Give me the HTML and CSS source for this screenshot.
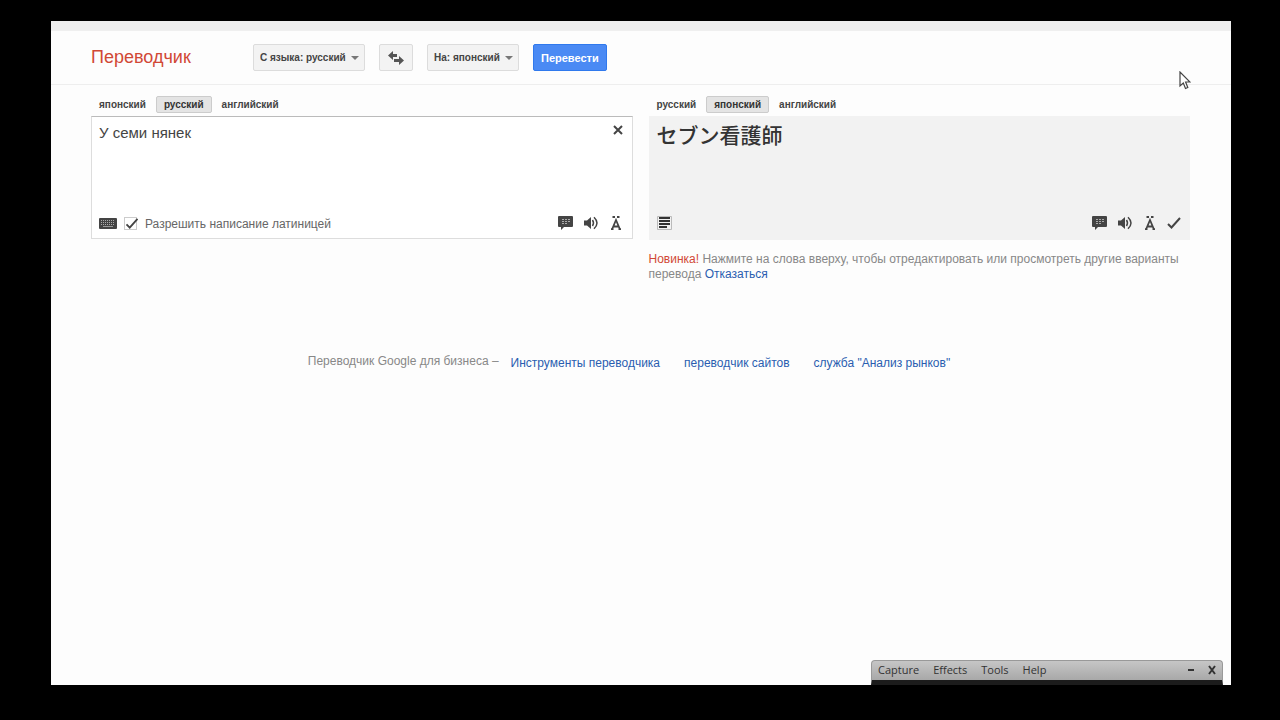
FILE: index.html
```html
<!DOCTYPE html>
<html lang="ru">
<head>
<meta charset="utf-8">
<title>Переводчик</title>
<link rel="stylesheet" href="styles.css">
</head>
<body>
<svg class="sprite" aria-hidden="true">
  <symbol id="i-comment" viewBox="0 0 15 14"><path fill="#444" d="M1 0h13q1 0 1 1v9q0 1-1 1H6l-3 3v-3H1q-1 0-1-1V1q0-1 1-1z"/><path stroke="#aaa" stroke-dasharray="2 1" d="M4 3.500h8M4 5.500h8M4 7.500h5"/></symbol>
  <symbol id="i-sound" viewBox="0 0 15 14"><path fill="#444" d="M0 4.500h3L7 1v12L3 9.500H0z"/><path fill="none" stroke="#444" stroke-width="1.500" d="M8.500 4q2 3 0 6M10 1.200q6 5.800 0 11.600"/></symbol>
  <symbol id="i-accent" viewBox="0 0 12 16"><path fill="#444" d="M2.500 1h2.500v2H2.500zM7 1h2.500v2H7z"/><path fill="none" stroke="#444" stroke-width="1.800" d="M2 14.500 6 5l4 9.500M3.500 11.500h5M1 14.200h2.500M8.500 14.200H11"/></symbol>
  <symbol id="i-check" viewBox="0 0 14 12"><path fill="none" stroke="#444" stroke-width="2" d="M1 7l3.500 3.500L13 1"/></symbol>
</svg>
<div class="screen">
  <div class="strip"></div>
  <header class="header">
    <h1 class="logo">Переводчик</h1>
    <span class="picker"><select class="btn" aria-label="С языка"><option>С языка: русский</option></select></span>
    <button class="btn swap" type="button" aria-label="Поменять языки"><svg width="18" height="14" viewBox="0 0 18 14"><path fill="#555" d="M1 4.500 6 0v3h4v3H6v3zM17 9.500 12 5v3H7v3h5v3z"/></svg></button>
    <span class="picker"><select class="btn" aria-label="На"><option>На: японский</option></select></span>
    <button class="btn primary" type="button">Перевести</button>
  </header>
  <main class="columns">
    <section class="column">
      <nav class="tabs"><button class="tab" type="button">японский</button><button class="tab active" type="button">русский</button><button class="tab" type="button">английский</button></nav>
      <div class="box source">
        <div class="entry">
          <textarea class="text" aria-label="Исходный текст" spellcheck="false">У семи нянек</textarea>
          <button class="icon" type="button" aria-label="Очистить"><svg width="10" height="10" viewBox="0 0 10 10"><path stroke="#444" stroke-width="2" d="M1 1l8 8M9 1 1 9"/></svg></button>
        </div>
        <div class="tools">
          <button class="icon keys" type="button" aria-label="Клавиатура"><svg width="18" height="11" viewBox="0 0 18 11"><rect width="18" height="11" rx="1" fill="#444"/><path stroke="#aaa" stroke-dasharray="1 1" d="M2 2.500h14M2 4.500h14M2 6.500h14"/><path stroke="#999" d="M4 8.500h10"/></svg></button>
          <span class="tick"><input type="checkbox" id="latin" checked><svg width="14" height="11" viewBox="0 0 14 12"><use href="#i-check"/></svg></span>
          <label class="latin" for="latin">Разрешить написание латиницей</label>
          <div class="actions">
            <button class="icon" type="button" aria-label="Комментарий"><svg width="15" height="14"><use href="#i-comment"/></svg></button>
            <button class="icon" type="button" aria-label="Прослушать"><svg width="15" height="14"><use href="#i-sound"/></svg></button>
            <button class="icon" type="button" aria-label="Латиница"><svg width="12" height="16"><use href="#i-accent"/></svg></button>
          </div>
        </div>
      </div>
    </section>
    <section class="column">
      <nav class="tabs"><button class="tab" type="button">русский</button><button class="tab active" type="button">японский</button><button class="tab" type="button">английский</button></nav>
      <div class="box result">
        <div class="translation" lang="ja">セブン看護師</div>
        <div class="tools">
          <button class="icon" type="button" aria-label="Словарь"><svg width="15" height="14" viewBox="0 0 15 14"><path stroke="#bbb" fill="none" d="M.5.5h14v13H.5z"/><path stroke="#333" stroke-width="2" d="M2 2h11M2 5h11M2 8h11M2 11h8"/></svg></button>
          <div class="actions">
            <button class="icon" type="button" aria-label="Комментарий"><svg width="15" height="14"><use href="#i-comment"/></svg></button>
            <button class="icon" type="button" aria-label="Прослушать"><svg width="15" height="14"><use href="#i-sound"/></svg></button>
            <button class="icon" type="button" aria-label="Латиница"><svg width="12" height="16"><use href="#i-accent"/></svg></button>
            <button class="icon" type="button" aria-label="Оценить"><svg width="14" height="12"><use href="#i-check"/></svg></button>
          </div>
        </div>
      </div>
      <p class="note"><strong>Новинка!</strong> Нажмите на слова вверху, чтобы отредактировать или просмотреть другие варианты перевода <a href="#">Отказаться</a></p>
    </section>
  </main>
  <footer class="footer">
    <span>Переводчик Google для бизнеса –</span>
    <nav class="links"><a href="#">Инструменты переводчика</a><a href="#">переводчик сайтов</a><a href="#">служба "Анализ рынков"</a></nav>
  </footer>
  <svg class="cursor" width="12" height="19" viewBox="0 0 12 19"><path fill="#fff" stroke="#444" stroke-width="1.200" d="M1 1v14l3.300-3 2.200 5.500 2.300-1L6.600 11H11z"/></svg>
  <div class="recorder">
    <div class="bar">
      <button type="button">Capture</button><button type="button">Effects</button><button type="button">Tools</button><button type="button">Help</button>
      <button class="min" type="button" aria-label="Свернуть"><svg width="6" height="10" viewBox="0 0 6 10"><path stroke="#333" stroke-width="2" d="M0 5h6"/></svg></button>
      <button type="button" aria-label="Закрыть"><svg width="8" height="10" viewBox="0 0 8 10"><path stroke="#333" stroke-width="2" d="M1 1l6 8M7 1 1 9"/></svg></button>
    </div>
  </div>
</div>
</body>
</html>
```
FILE: styles.css
```css
* { box-sizing: border-box; }
body {
  margin: 0;
  min-height: 100vh;
  display: flex;
  padding: 21px 49px 35px 51px;
  background: #000;
  color: #444;
  font-family: "Liberation Sans", Arial, "Noto Sans CJK JP", sans-serif;
  font-size: 12px;
}
button, select, textarea { font-family: inherit; color: inherit; }
button { border: 0; padding: 0; background: none; }
svg { display: block; }
a { color: #2a5db0; text-decoration: none; }
.sprite { position: absolute; width: 0; height: 0; }
.screen { position: relative; flex: 1; background: #fdfdfd; overflow: hidden; }
.strip { height: 10px; background: #efefef; }

.header {
  display: flex;
  align-items: center;
  gap: 14px;
  height: 54px;
  padding: 0 40px;
  border-bottom: 1px solid #eee;
}
.logo { margin: 0; width: 148px; font-size: 18px; font-weight: 400; color: #d14836; }
.btn {
  height: 27px;
  padding: 0 7px;
  border: 1px solid #dcdcdc;
  border-radius: 2px;
  background: #f3f3f3;
  font-size: 10px;
  font-weight: 700;
}
.picker { position: relative; }
.picker .btn { display: block; appearance: none; padding: 0 18px 0 6px; }
.picker::after {
  content: "";
  position: absolute;
  right: 6px;
  top: 12px;
  border: 4px solid transparent;
  border-top-color: #777;
  border-bottom: 0;
  pointer-events: none;
}
.primary { border-color: #3079ed; background: #4a8af4; color: #fff; font-size: 11px; }

.columns { display: grid; grid-template-columns: 1fr 1fr; gap: 16px; padding: 11px 41px 0 40px; }
.tabs { display: flex; gap: 2px; height: 17px; margin-bottom: 3px; }
.tab { padding: 0 7px; border: 1px solid transparent; border-radius: 2px; font-size: 10px; font-weight: 700; }
.tab.active { border-color: #ccc; background: #e4e4e4; color: #333; }
.box { display: flex; flex-direction: column; justify-content: space-between; min-height: 123px; padding: 7px; }
.source { padding-bottom: 6px; border: 1px solid #ddd; border-top-color: #bbb; background: #fff; }
.result { min-height: 124px; padding: 8px; background: #f2f2f2; }
.entry { display: flex; align-items: flex-start; }
.text { flex: 1; height: 60px; padding: 0; border: 0; resize: none; background: none; font-size: 15px; line-height: 18px; }
.entry .icon { padding: 1px 2px; }
.translation { color: #333; font-family: "Noto Sans CJK JP", sans-serif; font-size: 21px; font-weight: 500; line-height: 21px; }
.tools { display: flex; align-items: center; height: 18px; }
.keys { margin-right: 7px; }
.tick { position: relative; margin-right: 8px; }
.tick input { display: block; appearance: none; width: 13px; height: 13px; margin: 0; border: 1px solid #ccc; background: #fff; }
.tick svg { position: absolute; left: 1px; top: 1px; pointer-events: none; }
.latin { padding-top: 2px; color: #666; }
.actions { display: flex; align-items: center; gap: 11px; margin-left: auto; }
.source .actions { margin-right: 3px; }
.result .actions { margin-right: 1px; }
.note { margin: 12px 0 0; color: #888; line-height: 15px; }
.note strong { font-weight: 400; color: #d14836; }

.footer { display: flex; justify-content: center; gap: 12px; margin-top: 72px; padding-right: 24px; color: #888; }
.links { display: flex; gap: 24px; padding-top: 2px; }

.cursor { position: absolute; right: 40px; top: 50px; }
.recorder {
  position: absolute;
  right: 8px;
  bottom: 0;
  width: 352px;
  border: 1px solid #999;
  border-bottom: 5px solid #1c1c1c;
  border-radius: 4px 4px 0 0;
  background: linear-gradient(#c6c6c6, #a8a8a8);
}
.bar { display: flex; align-items: center; gap: 14px; height: 19px; padding: 0 6px 2px; color: #333; }
.bar button { font-family: "Open Sans", "Noto Sans", sans-serif; font-size: 11px; }
.bar .min { margin-left: auto; }
```
